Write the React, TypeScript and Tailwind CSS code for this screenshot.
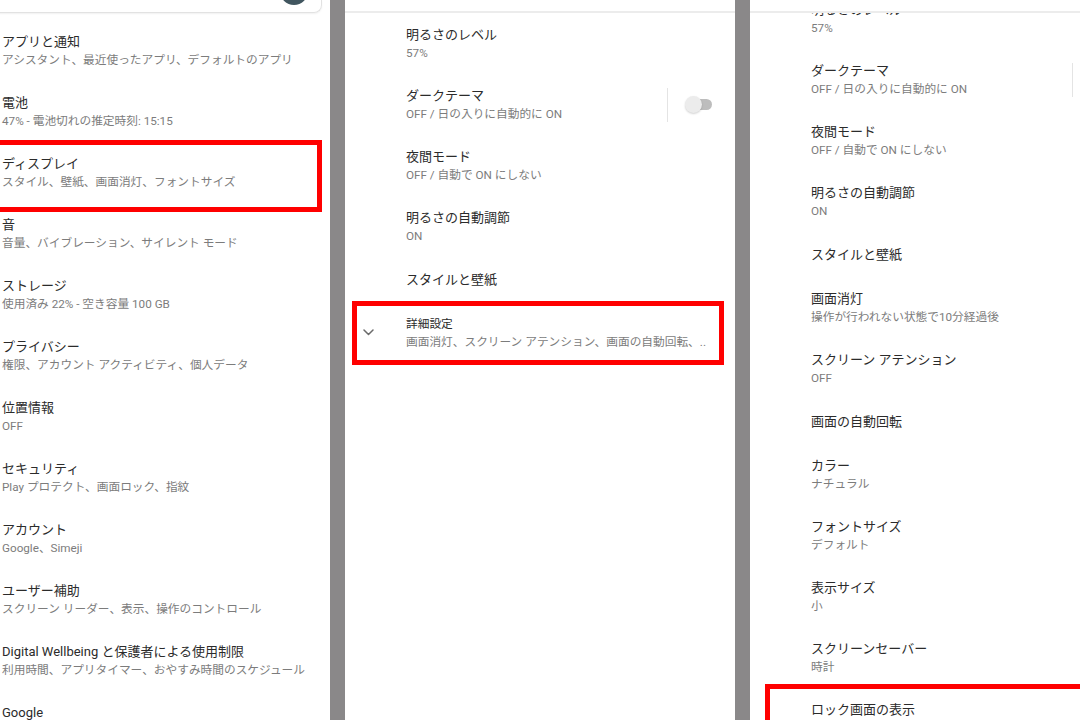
import React from 'react';

type Item = {
  title: string;
  sub?: string;
  small?: boolean;
  chevron?: boolean;
  toggle?: boolean;
  // extra classes for the red outline drawn round a row
  mark?: string;
};

const settingsHome: Item[] = [
  { title: 'アプリと通知', sub: 'アシスタント、最近使ったアプリ、デフォルトのアプリ' },
  { title: '電池', sub: '47% - 電池切れの推定時刻: 15:15' },
  {
    title: 'ディスプレイ',
    sub: 'スタイル、壁紙、画面消灯、フォントサイズ',
    mark: 'top-[-2px] bottom-[-9px] left-[-10px] right-[8px]',
  },
  { title: '音', sub: '音量、バイブレーション、サイレント モード' },
  { title: 'ストレージ', sub: '使用済み 22% - 空き容量 100 GB' },
  { title: 'プライバシー', sub: '権限、アカウント アクティビティ、個人データ' },
  { title: '位置情報', sub: 'OFF' },
  { title: 'セキュリティ', sub: 'Play プロテクト、画面ロック、指紋' },
  { title: 'アカウント', sub: 'Google、Simeji' },
  { title: 'ユーザー補助', sub: 'スクリーン リーダー、表示、操作のコントロール' },
  { title: 'Digital Wellbeing と保護者による使用制限', sub: '利用時間、アプリタイマー、おやすみ時間のスケジュール' },
  { title: 'Google', sub: 'サービスと設定' },
];

const displayCollapsed: Item[] = [
  { title: '明るさのレベル', sub: '57%' },
  { title: 'ダークテーマ', sub: 'OFF / 日の入りに自動的に ON', toggle: true },
  { title: '夜間モード', sub: 'OFF / 自動で ON にしない' },
  { title: '明るさの自動調節', sub: 'ON' },
  { title: 'スタイルと壁紙' },
  {
    title: '詳細設定',
    sub: '画面消灯、スクリーン アテンション、画面の自動回転、..',
    small: true,
    chevron: true,
    mark: 'top-[-1px] bottom-[-2px] left-[7px] right-[11px]',
  },
];

const displayExpanded: Item[] = [
  { title: '明るさのレベル', sub: '57%' },
  { title: 'ダークテーマ', sub: 'OFF / 日の入りに自動的に ON', toggle: true },
  { title: '夜間モード', sub: 'OFF / 自動で ON にしない' },
  { title: '明るさの自動調節', sub: 'ON' },
  { title: 'スタイルと壁紙' },
  { title: '画面消灯', sub: '操作が行われない状態で10分経過後' },
  { title: 'スクリーン アテンション', sub: 'OFF' },
  { title: '画面の自動回転' },
  { title: 'カラー', sub: 'ナチュラル' },
  { title: 'フォントサイズ', sub: 'デフォルト' },
  { title: '表示サイズ', sub: '小' },
  { title: 'スクリーンセーバー', sub: '時計' },
  {
    title: 'ロック画面の表示',
    sub: 'すべての通知内容を表示する',
    mark: 'top-[-4px] bottom-[-20px] left-[15px] right-[-20px]',
  },
];

const Chevron = () => (
  <svg width="11" height="7" viewBox="0 0 11 7" fill="none">
    <path d="M1 1l4.5 4.5L10 1" stroke="#6b6b6b" strokeWidth="1.5" strokeLinecap="round" strokeLinejoin="round" />
  </svg>
);

const Switch = () => (
  <div className="relative ml-[17px] h-[17px] w-[27px]">
    <div className="absolute left-[4px] right-0 top-[3px] h-[11px] rounded-full bg-[#bdbdbd]" />
    <div className="absolute left-0 top-0 size-[17px] rounded-full bg-[#ececec] shadow-[0_1px_2px_rgba(0,0,0,0.18)]" />
  </div>
);

function Row({ item, inset }: { item: Item; inset: boolean }) {
  return (
    <div className={`relative flex items-center ${item.sub ? 'h-[61px]' : 'h-[45px]'}`}>
      {inset && (
        <div className="flex w-[61px] shrink-0 items-center pl-[18px]">{item.chevron && <Chevron />}</div>
      )}
      <div className={`min-w-0 flex-1 ${inset ? '' : 'pl-[2px]'}`}>
        <p
          className={`whitespace-nowrap leading-[18px] text-[#2b2b2b] ${item.small ? 'text-[11.7px]' : 'text-[13px]'}`}
        >
          {item.title}
        </p>
        {item.sub && <p className="whitespace-nowrap text-[11.7px] leading-[18px] text-[#7c7c7c]">{item.sub}</p>}
      </div>
      {item.toggle && (
        <div className="flex w-[68px] shrink-0 items-center">
          <div className="h-[34px] w-px bg-[#e4e4e4]" />
          <Switch />
        </div>
      )}
      {item.mark && <div className={`pointer-events-none absolute border-[5px] border-[#ff0000] ${item.mark}`} />}
    </div>
  );
}

const AppBar = () => <div className="h-[13px] shrink-0 border-b-2 border-[#ececec] bg-white" />;

export default function App() {
  return (
    <div className="flex h-[720px] w-[1080px] gap-[15px] overflow-hidden bg-[#8a8889] font-['Roboto','Noto_Sans_CJK_JP',sans-serif]">
      {/* settings top level */}
      <div className="flex h-full w-[330px] shrink-0 flex-col overflow-hidden bg-white">
        <div className="-ml-3 mr-[8px] flex h-[13px] shrink-0 items-end justify-end overflow-hidden rounded-b-lg border border-t-0 border-[#e2e2e2] pb-[7px] pr-[13px] shadow-[0_1px_2px_rgba(0,0,0,0.06)]">
          <div className="size-[28px] shrink-0 rounded-full bg-[#41565f]" />
        </div>
        <div className="min-h-0 flex-1 overflow-hidden pt-[7px]">
          {settingsHome.map((item) => (
            <Row key={item.title} item={item} inset={false} />
          ))}
        </div>
      </div>

      {/* display, advanced collapsed */}
      <div className="flex h-full w-[390px] shrink-0 flex-col overflow-hidden bg-white">
        <AppBar />
        <div className="min-h-0 flex-1 overflow-hidden">
          {displayCollapsed.map((item) => (
            <Row key={item.title} item={item} inset />
          ))}
        </div>
      </div>

      {/* display, advanced expanded and scrolled */}
      <div className="flex h-full w-[390px] shrink-0 flex-col overflow-hidden bg-white">
        <AppBar />
        <div className="min-h-0 flex-1 overflow-hidden">
          <div className="-mt-[25px]">
            {displayExpanded.map((item) => (
              <Row key={item.title} item={item} inset />
            ))}
          </div>
        </div>
      </div>
    </div>
  );
}
